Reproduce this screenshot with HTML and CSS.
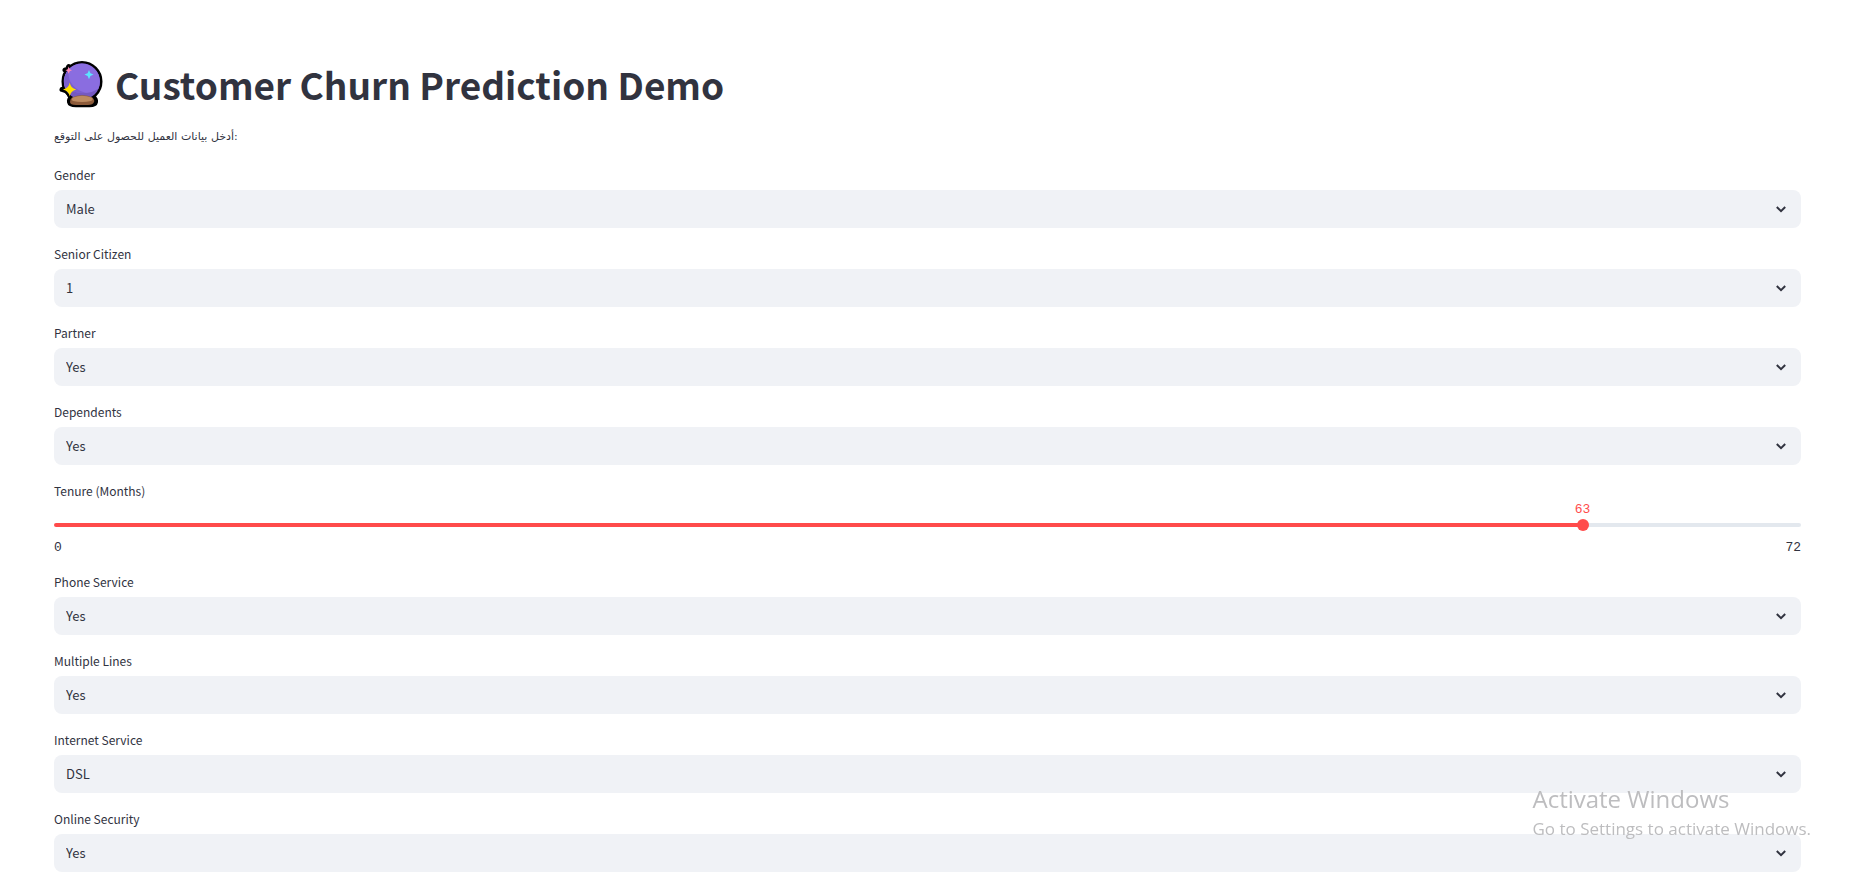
FILE: index.html
```
<!DOCTYPE html>
<html lang="en">
<head>
<meta charset="utf-8">
<meta name="viewport" content="width=device-width, initial-scale=1">
<title>Customer Churn Prediction Demo</title>
<link rel="stylesheet" href="styles.css">
</head>
<body>
<svg class="defs" aria-hidden="true">
  <symbol id="chevron" viewBox="0 0 10 7"><path d="M.8 1 5 5.200 9.200 1" fill="none" stroke="currentColor" stroke-width="2"/></symbol>
</svg>
<main class="page">
  <h1 class="title">
    <svg class="title-icon" viewBox="8 5 46 50" role="img" aria-label="Crystal ball">
      <g fill="#000" stroke="#000" stroke-width="5" stroke-linejoin="round">
        <circle cx="32" cy="27.500" r="18"/>
        <path d="M21.500 43.500Q19 45.500 19.500 48Q20 50.700 26 50.700H39.500Q45 50.700 45.500 48Q46 45 43 43.500Z"/>
        <path d="M18.700 12.500 19.800 15 22 16 19.800 17 18.700 19 17.600 17 15 16 17.600 15Z" stroke-width="5"/>
        <path d="M20 29.500 22 34 26 35.500 22 37.500 20 42 18 37.500 12 35.500 18 34Z" stroke-width="5"/>
      </g>
      <circle cx="32" cy="27.500" r="18" fill="#7559c1"/>
      <path d="M32 9.500A18 18 0 0 1 48.500 34.500Q42 39 34 39Q24 39 15 34A18 18 0 0 1 32 9.500Z" fill="#8a6de0"/>
      <path d="M20 14A18 18 0 0 0 15 33Q24 40 36 39Q25 36 20.500 28Q17 21 20 14Z" fill="#7b5fce"/>
      <path d="M22 43.500Q32 39 42.500 43.500Q45 46.500 44 48Q43 51 38 51H26Q20 51 20 48Q20 45 22 43.500Z" fill="#8c5a39"/>
      <path d="M23 43.500Q32 40 41.500 43.500Q44 45.500 41 47Q32 49 23 47Q20.500 45.500 23 43.500Z" fill="#bd8b61"/>
      <path d="M18.700 12.500 19.700 15.200 22 16.200 19.700 17.200 18.700 19.700 17.700 17.200 15.500 16.200 17.700 15.200Z" fill="#ff8ab9"/>
      <path d="M39 16 40.400 19.200 43.500 20.600 40.400 22 39 25.200 37.600 22 34.500 20.600 37.600 19.200Z" fill="#5ce5ff"/>
      <path d="M19.800 28.500Q20.500 34.300 26.200 35.500Q20.500 36.800 19.800 42.500Q18.800 36.800 13 35.500Q18.800 34.300 19.800 28.500Z" fill="#ffe100"/>
    </svg>
    <span>Customer Churn Prediction Demo</span>
  </h1>
  <p class="intro" lang="ar">أدخل بيانات العميل للحصول على التوقع:</p>

  <form class="form">
    <div class="field">
      <label class="label" for="gender">Gender</label>
      <div class="select-box">
        <select class="select" id="gender"><option>Male</option><option>Female</option></select>
        <svg class="chevron" aria-hidden="true"><use href="#chevron"/></svg>
      </div>
    </div>
    <div class="field">
      <label class="label" for="senior">Senior Citizen</label>
      <div class="select-box">
        <select class="select" id="senior"><option>1</option><option>0</option></select>
        <svg class="chevron" aria-hidden="true"><use href="#chevron"/></svg>
      </div>
    </div>
    <div class="field">
      <label class="label" for="partner">Partner</label>
      <div class="select-box">
        <select class="select" id="partner"><option>Yes</option><option>No</option></select>
        <svg class="chevron" aria-hidden="true"><use href="#chevron"/></svg>
      </div>
    </div>
    <div class="field">
      <label class="label" for="dependents">Dependents</label>
      <div class="select-box">
        <select class="select" id="dependents"><option>Yes</option><option>No</option></select>
        <svg class="chevron" aria-hidden="true"><use href="#chevron"/></svg>
      </div>
    </div>
    <div class="field">
      <label class="label" for="tenure">Tenure (Months)</label>
      <div class="slider" style="--pos: 87.5%">
        <output class="slider-value" for="tenure">63</output>
        <div class="track"><input class="range" id="tenure" type="range" min="0" max="72" value="63"></div>
        <div class="limits"><span>0</span><span>72</span></div>
      </div>
    </div>
    <div class="field">
      <label class="label" for="phone">Phone Service</label>
      <div class="select-box">
        <select class="select" id="phone"><option>Yes</option><option>No</option></select>
        <svg class="chevron" aria-hidden="true"><use href="#chevron"/></svg>
      </div>
    </div>
    <div class="field">
      <label class="label" for="lines">Multiple Lines</label>
      <div class="select-box">
        <select class="select" id="lines"><option>Yes</option><option>No</option></select>
        <svg class="chevron" aria-hidden="true"><use href="#chevron"/></svg>
      </div>
    </div>
    <div class="field">
      <label class="label" for="internet">Internet Service</label>
      <div class="select-box">
        <select class="select" id="internet"><option>DSL</option><option>Fiber optic</option><option>No</option></select>
        <svg class="chevron" aria-hidden="true"><use href="#chevron"/></svg>
      </div>
    </div>
    <div class="field">
      <label class="label" for="security">Online Security</label>
      <div class="select-box">
        <select class="select" id="security"><option>Yes</option><option>No</option></select>
        <svg class="chevron" aria-hidden="true"><use href="#chevron"/></svg>
      </div>
    </div>
  </form>
</main>
<aside class="watermark">
  <p class="watermark-title">Activate Windows</p>
  <p class="watermark-text">Go to Settings to activate Windows.</p>
</aside>
</body>
</html>
```
FILE: styles.css
```
* {
  box-sizing: border-box;
}

body {
  margin: 0;
  background: #fff;
  color: #31333f;
  font-family: "Noto Sans CJK SC", "DejaVu Sans", sans-serif;
  font-size: 13px;
}

.defs {
  position: absolute;
  width: 0;
  height: 0;
}

.page {
  padding: 59px 57px 0 54px;
}

.title {
  display: flex;
  align-items: center;
  gap: 11px;
  margin: 0;
  padding-left: 4px;
  font-size: 37px;
  font-weight: 700;
  line-height: 50px;
}

.title-icon {
  flex: none;
  width: 46px;
  height: 50px;
}

.intro {
  margin: 16px 0;
  font-family: "DejaVu Sans", sans-serif;
  font-size: 11px;
  line-height: 24px;
}

.form {
  display: flex;
  flex-direction: column;
  gap: 16px;
}

.label {
  display: block;
  height: 25px;
  font-size: 12px;
  line-height: 20px;
}

.select-box {
  display: grid;
  align-items: center;
  height: 38px;
  border-radius: 8px;
  background: #f0f2f6;
}

.select {
  grid-area: 1 / 1;
  width: 100%;
  height: 100%;
  padding: 0 40px 2px 12px;
  border: 0;
  border-radius: 8px;
  background: transparent;
  color: inherit;
  font: inherit;
  appearance: none;
}

.chevron {
  grid-area: 1 / 1;
  justify-self: end;
  width: 10px;
  height: 7px;
  margin-right: 15px;
  pointer-events: none;
}

.slider {
  position: relative;
  height: 50px;
  padding-top: 17px;
  font-family: "Liberation Mono", monospace;
  font-size: 13px;
  line-height: 16px;
}

.slider-value {
  position: absolute;
  top: -4px;
  left: var(--pos);
  transform: translateX(-50%);
  color: #ff4b4b;
}

.track {
  display: flex;
  align-items: center;
  height: 4px;
  border-radius: 2px;
  background: linear-gradient(to right, #ff4b4b var(--pos), #e3e8ee var(--pos));
}

.range {
  flex: 1;
  height: 12px;
  margin: 0 -6px;
  background: transparent;
  appearance: none;
}

.range::-webkit-slider-thumb {
  width: 12px;
  height: 12px;
  border-radius: 50%;
  background: #ff4b4b;
  appearance: none;
}

.limits {
  display: flex;
  justify-content: space-between;
  padding-top: 13px;
}

.watermark {
  position: fixed;
  right: 47px;
  bottom: 36px;
  color: #bdbdbf;
  font-family: "Open Sans", sans-serif;
  pointer-events: none;
}

.watermark p {
  margin: 0;
}

.watermark-title {
  font-size: 24px;
  line-height: 34px;
}

.watermark-text {
  font-size: 17px;
  line-height: 26px;
}
```
